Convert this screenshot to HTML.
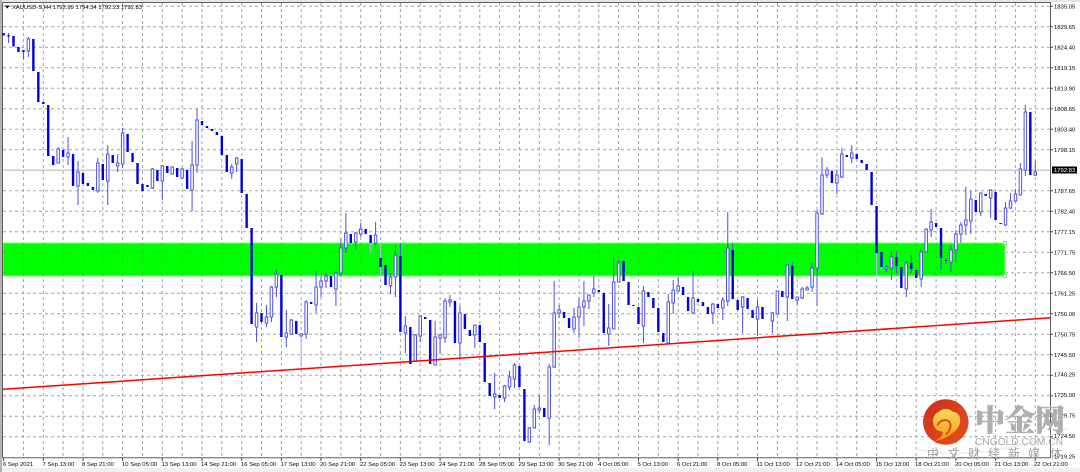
<!DOCTYPE html>
<html><head><meta charset="utf-8"><title>XAUUSD-S,H4</title>
<style>
html,body{margin:0;padding:0;background:#fff;width:1080px;height:472px;overflow:hidden}
svg{display:block;filter:blur(.3px)}
text{font-family:"Liberation Sans","Noto Sans CJK SC",sans-serif}
.p text{font-size:5.9px;fill:#000}
.t text{font-size:5.9px;fill:#000}
</style></head><body>
<svg width="1080" height="472" viewBox="0 0 1080 472" xmlns="http://www.w3.org/2000/svg">
<defs>
<clipPath id="g"><rect x="3" y="243" width="1002" height="33"/></clipPath>
<linearGradient id="sw" x1="0" y1="0" x2="0" y2="1"><stop offset="0" stop-color="#fbd95a"/><stop offset=".6" stop-color="#f7b533"/><stop offset="1" stop-color="#ef8f1e"/></linearGradient>
<linearGradient id="rd" x1="0" y1="0" x2="1" y2="1"><stop offset="0" stop-color="#cf2e1c"/><stop offset="1" stop-color="#e4511b"/></linearGradient>
<path id="gr" d="M23.4 3V457M43.3 3V457M63.1 3V457M83 3V457M102.8 3V457M122.6 3V457M142.5 3V457M162.3 3V457M182.2 3V457M202 3V457M221.8 3V457M241.7 3V457M261.5 3V457M281.4 3V457M301.2 3V457M321 3V457M340.9 3V457M360.7 3V457M380.6 3V457M400.4 3V457M420.2 3V457M440.1 3V457M459.9 3V457M479.8 3V457M499.6 3V457M519.4 3V457M539.3 3V457M559.1 3V457M579 3V457M598.8 3V457M618.6 3V457M638.5 3V457M658.3 3V457M678.2 3V457M698 3V457M717.8 3V457M737.7 3V457M757.5 3V457M777.4 3V457M797.2 3V457M817 3V457M836.9 3V457M856.7 3V457M876.6 3V457M896.4 3V457M916.2 3V457M936.1 3V457M955.9 3V457M975.8 3V457M995.6 3V457M1015.4 3V457M1035.3 3V457M3 6.2H1050M3 26.7H1050M3 47.2H1050M3 67.7H1050M3 88.2H1050M3 108.7H1050M3 129.2H1050M3 149.7H1050M3 190.7H1050M3 211.2H1050M3 231.7H1050M3 252.2H1050M3 272.7H1050M3 293.2H1050M3 313.7H1050M3 334.2H1050M3 354.7H1050M3 375.2H1050M3 395.7H1050M3 416.2H1050M3 436.7H1050"/>
</defs>
<rect width="1080" height="472" fill="#fff"/>
<rect width="1080" height="2" fill="#e6e6e6"/>
<rect y="468" width="1080" height="4" fill="#f0f0f0"/>
<rect width="2" height="472" fill="#b4b4b4"/>
<use href="#gr" fill="none" stroke="#98a4b2" stroke-width="1" stroke-dasharray="3 3"/>
<rect x="3" y="243" width="1002" height="33" fill="#00ff00" stroke="#7dff7d" stroke-width="1"/>
<g clip-path="url(#g)"><use href="#gr" fill="none" stroke="#28d028" stroke-width="1" stroke-dasharray="3 3"/></g>
<rect x="1003.5" y="241.5" width="3" height="3" fill="#fff" stroke="#7de87d"/>
<rect x="1003.5" y="274.5" width="3" height="3" fill="#fff" stroke="#7de87d"/>
<path d="M3 170.2H1050" stroke="#c6cad0" stroke-width="1.4"/>
<!-- frame -->
<path d="M2.5 2.5V458M2 2.5H1050.5M1050.5 2V458M2 457.8H1051" fill="none" stroke="#5e5e5e" stroke-width="1"/>
<g transform="translate(3.6 0) scale(4.96 1)">
<!-- bull wicks -->
<path vector-effect="non-scaling-stroke" fill="none" stroke="#4f4fe0" stroke-width="1" d="M5 37V57M11 147V163M13 137V165M15 161V205M19 158V193M21 145V205M23 154V172M24 128V168M30 168V189M32 165V200M36 168V179M38 141V211M39 109V173M46 164V179M47 157V172M51 303V342M53 305V327M54 286V322M55 269V297M57 310V347M58 319V335M61 300V339M63 271V313M64 276V297M65 273V288M67 271V306M68 239V277M69 213V253M71 232V250M72 223V237M75 222V248M78 273V294M79 245V297M81 316V353M83 334V362M84 315V342M87 321V365M88 334V354M89 298V343M90 295V307M92 306V358M95 325V348M99 373V409M101 385V402M102 371V390M103 363V388M106 427V443M107 405V428M108 395V413M110 364V445M111 281V368M112 305V318M115 308V333M116 297V338M117 281V326M118 295V309M119 276V297M122 304V346M123 257V329M124 260V282M129 286V343M134 294V344M135 280V314M136 277V291M139 271V313M143 303V324M145 297V320M146 212V306M149 296V333M152 300V336M155 312V333M158 264V321M160 297V305M161 287V299M162 286V290M163 263V292M164 210V306M165 157V215M166 167V178M168 170V194M169 148V178M171 145V163M178 265V272M179 251V280M182 261V297M185 247V287M187 209V237M191 245V272M192 230V262M193 222V243M194 187V235M195 191V234M197 193V216M199 189V218M202 202V226M203 193V209M204 189V202M205 163V195M206 105V176M208 161V176M1 33V43M4 50V59M180 252V273M183 255V273M189 258V270M190 258V264M80 243V256M147 243V250M159 262V266"/>
<!-- light wicks -->
<path vector-effect="non-scaling-stroke" fill="none" stroke="#b3b3f0" stroke-width="1.2" d="M60 334V367M74 243V253M76 243V276M176 253V276M177 267V272"/>
<!-- bull bodies -->
<path vector-effect="non-scaling-stroke" fill="#fff" stroke="#5252e4" stroke-width="1" d="M4.75 39h.5v12h-.5zM10.75 149h.5v14h-.5zM12.75 153h.5v4h-.5zM14.75 172h.5v14h-.5zM18.75 163h.5v28h-.5zM20.75 154h.5v27h-.5zM22.75 163h.5v3h-.5zM23.75 133h.5v31h-.5zM29.75 169h.5v19h-.5zM31.75 166h.5v15h-.5zM33.75 167h.5v7h-.5zM35.75 169h.5v9h-.5zM37.75 165h.5v25h-.5zM38.75 120h.5v45h-.5zM45.75 167h.5v6h-.5zM46.75 158h.5v6h-.5zM50.75 313h.5v14h-.5zM52.75 317h.5v6h-.5zM53.75 287h.5v30h-.5zM54.75 274h.5v13h-.5zM56.75 333h.5v4h-.5zM57.75 320h.5v14h-.5zM59.75 334h.5v2h-.5zM60.75 302h.5v32h-.5zM62.75 287h.5v18h-.5zM63.75 281h.5v6h-.5zM64.75 276h.5v5h-.5zM66.75 273h.5v16h-.5zM67.75 248h.5v25h-.5zM68.75 233h.5v15h-.5zM70.75 233h.5v9h-.5zM71.75 229h.5v5h-.5zM74.75 235h.5v8h-.5zM77.75 277h.5v9h-.5zM78.75 255h.5v22h-.5zM80.75 326h.5v7h-.5zM82.75 335h.5v26h-.5zM83.75 316h.5v20h-.5zM86.75 337h.5v28h-.5zM87.75 335h.5v3h-.5zM88.75 301h.5v37h-.5zM89.75 300h.5v2h-.5zM91.75 313h.5v30h-.5zM94.75 325h.5v10h-.5zM98.75 394h.5v3h-.5zM100.75 386h.5v12h-.5zM101.75 377h.5v10h-.5zM102.75 365h.5v14h-.5zM105.75 428h.5v14h-.5zM106.75 409h.5v19h-.5zM107.75 408h.5v2h-.5zM109.75 367h.5v51h-.5zM110.75 313h.5v54h-.5zM111.75 310h.5v3h-.5zM114.75 317h.5v12h-.5zM115.75 307h.5v10h-.5zM116.75 301h.5v6h-.5zM117.75 295h.5v6h-.5zM118.75 289h.5v4h-.5zM121.75 328h.5v6h-.5zM122.75 282h.5v47h-.5zM123.75 263h.5v19h-.5zM128.75 291h.5v35h-.5zM133.75 302h.5v41h-.5zM134.75 290h.5v13h-.5zM135.75 286h.5v5h-.5zM138.75 298h.5v15h-.5zM142.75 304h.5v9h-.5zM144.75 300h.5v8h-.5zM145.75 248h.5v53h-.5zM148.75 297h.5v10h-.5zM151.75 307h.5v12h-.5zM154.75 313h.5v8h-.5zM155.75 291h.5v23h-.5zM157.75 265h.5v32h-.5zM159.75 297h.5v3h-.5zM160.75 289h.5v9h-.5zM161.75 288h.5v2h-.5zM162.75 268h.5v19h-.5zM163.75 213h.5v55h-.5zM164.75 175h.5v39h-.5zM165.75 170h.5v5h-.5zM167.75 175h.5v8h-.5zM168.75 154h.5v23h-.5zM170.75 153h.5v5h-.5zM177.75 267h.5v2h-.5zM178.75 257h.5v11h-.5zM181.75 263h.5v26h-.5zM184.75 252h.5v27h-.5zM185.75 229h.5v23h-.5zM186.75 222h.5v8h-.5zM190.75 250h.5v12h-.5zM191.75 234h.5v16h-.5zM192.75 225h.5v9h-.5zM193.75 220h.5v5h-.5zM194.75 199h.5v22h-.5zM196.75 193h.5v19h-.5zM198.75 190h.5v8h-.5zM201.75 208h.5v17h-.5zM202.75 201h.5v7h-.5zM203.75 194h.5v7h-.5zM204.75 169h.5v26h-.5zM205.75 112h.5v58h-.5zM207.75 172h.5v3h-.5z"/>
<!-- bear bodies -->
<path vector-effect="non-scaling-stroke" fill="none" stroke="#0000dc" stroke-width="2.4" d="M0 33V35.5M1 35V36.5M2 36V46.5M3 47V52M4 50V52M6 39V71M7 72V102M8 102V104M9 105V156M10 156V165M12 150V157M14 154V186M16 173V184M17 183V186M18 187V190M20 164V180M22 155V163M25 134V152M26 153V162M27 163V184M28 184V191M29 185V187M31 170V181M33 166V173M35 168V177M37 170V189M40 121V125M41 126V128M42 129V131M43 132V135M44 136V155M45 155V172M48 159V193M49 194V228M50 228V324M52 313V322M56 275V337M59 321V334M62 302V304M66 276V287M70 234V243M73 229V234M74 235V243M76 258V267M77 265V285M80 256V332M82 327V364M85 317V319M86 320V364M91 301V343M93 314V329M94 330V336M96 325V342M97 343V382M98 383V396M100 395V398M104 366V387M105 389V441M109 408V417M113 312V318M114 318V328M120 290V292M121 293V333M125 261V281M126 282V305M127 305V306M128 307V324M130 292V297M131 298V308M132 308V332M133 333V342M137 287V295M138 297V311M140 299V302M141 302V306M142 307V314M144 304V308M147 250V299M148 300V310M150 298V309M151 310V318M153 307V319M157 291V297M159 266V299M167 171V183M170 155V157M172 154V159M173 160V163M174 164V170M175 172V205M176 206V253M177 252V267M180 257V266M181 267V288M183 263V269M184 270V278M188 223V227M189 228V258M190 260V261M196 200V212M198 194V196M200 192V220M201 223V224M207 112V175"/>
</g>
<path d="M3 389.3L1050.5 317.8" stroke="#ff0000" stroke-width="1.5" fill="none"/>
<!-- ticks -->
<path d="M3.6 458V461M43.3 458V461M83 458V461M122.6 458V461M162.3 458V461M202 458V461M241.7 458V461M281.4 458V461M321 458V461M360.7 458V461M400.4 458V461M440.1 458V461M479.8 458V461M519.4 458V461M559.1 458V461M598.8 458V461M638.5 458V461M678.2 458V461M717.8 458V461M757.5 458V461M797.2 458V461M836.9 458V461M876.6 458V461M916.2 458V461M955.9 458V461M995.6 458V461M1035.3 458V461M1051 6.2H1053M1051 26.7H1053M1051 47.2H1053M1051 67.7H1053M1051 88.2H1053M1051 108.7H1053M1051 129.2H1053M1051 149.7H1053M1051 190.7H1053M1051 211.2H1053M1051 231.7H1053M1051 252.2H1053M1051 272.7H1053M1051 293.2H1053M1051 313.7H1053M1051 334.2H1053M1051 354.7H1053M1051 375.2H1053M1051 395.7H1053M1051 416.2H1053M1051 436.7H1053" stroke="#444" stroke-width="1"/>
<!-- header -->
<path d="M5 5.5h4.6L7.3 8.6z" fill="#000"/>
<text x="12" y="9" font-size="5.9" fill="#000" textLength="130" lengthAdjust="spacingAndGlyphs">XAUUSD-S,H4  1792.99 1794.34 1792.23 1792.83</text>
<!-- price labels -->
<g class="p">
<text x="1054" y="8.3">1835.05</text><text x="1054" y="28.8">1829.65</text><text x="1054" y="49.3">1824.40</text><text x="1054" y="69.8">1819.15</text><text x="1054" y="90.3">1813.90</text><text x="1054" y="110.8">1808.65</text><text x="1054" y="131.3">1803.40</text><text x="1054" y="151.8">1798.15</text><text x="1054" y="192.8">1787.65</text><text x="1054" y="213.3">1782.40</text><text x="1054" y="233.8">1777.15</text><text x="1054" y="254.3">1771.75</text><text x="1054" y="274.8">1766.50</text><text x="1054" y="295.3">1761.25</text><text x="1054" y="315.8">1756.00</text><text x="1054" y="336.3">1750.75</text><text x="1054" y="356.8">1745.50</text><text x="1054" y="376.6">1740.25</text><text x="1054" y="397.1">1735.00</text><text x="1054" y="417.6">1729.75</text><text x="1054" y="438.1">1724.50</text><text x="1054" y="458.6">1719.25</text>
</g>
<rect x="1052" y="166.5" width="25" height="7" fill="#000"/>
<text x="1054" y="172.2" font-size="5.9" fill="#fff">1792.83</text>
<!-- time labels -->
<g class="t">
<text x="3" y="466">6 Sep 2021</text><text x="42.5" y="466">7 Sep 13:00</text><text x="82" y="466">8 Sep 21:00</text><text x="122" y="466">10 Sep 05:00</text><text x="161.5" y="466">13 Sep 13:00</text><text x="201" y="466">14 Sep 21:00</text><text x="241" y="466">16 Sep 05:00</text><text x="280.5" y="466">17 Sep 13:00</text><text x="320" y="466">20 Sep 21:00</text><text x="360" y="466">22 Sep 05:00</text><text x="399.5" y="466">23 Sep 13:00</text><text x="439" y="466">24 Sep 21:00</text><text x="479" y="466">28 Sep 05:00</text><text x="518.5" y="466">29 Sep 13:00</text><text x="558" y="466">30 Sep 21:00</text><text x="598" y="466">4 Oct 05:00</text><text x="637.5" y="466">5 Oct 13:00</text><text x="677" y="466">6 Oct 21:00</text><text x="717" y="466">8 Oct 05:00</text><text x="756.5" y="466">11 Oct 13:00</text><text x="796" y="466">12 Oct 21:00</text><text x="836" y="466">14 Oct 05:00</text><text x="875.5" y="466">15 Oct 13:00</text><text x="915" y="466">18 Oct 21:00</text><text x="955" y="466">20 Oct 05:00</text><text x="994.5" y="466">21 Oct 13:00</text><text x="1034" y="466">22 Oct 21:00</text>
</g>
<!-- watermark -->
<path d="M915 448C940 458 1010 456 1068 428" fill="none" stroke="#e4e4e4" stroke-width="1.4" opacity=".7"/>
<circle cx="945.8" cy="422" r="22.7" fill="url(#rd)"/>
<path d="M934.5 441C942 439.5 949 437 953 432.5C958 429.5 961 424 960 418.5C959.5 414 956 412 952 411.5C950 408.5 942 408 939.5 411.5C935 413 932.5 418 933 422C933.5 428 937 431.5 942 431.5C944 435 940 438.5 934.5 441Z" fill="url(#sw)"/>
<path d="M937.5 425.5C939.5 419 949.5 418 950.5 424.5C951 428.5 949 431.5 946 434.5" fill="none" stroke="#dc4a1e" stroke-width="1.9"/>
<text x="975" y="431" font-size="30" font-weight="900" fill="#afafaf" stroke="#afafaf" stroke-width=".5" textLength="90" lengthAdjust="spacingAndGlyphs" style="font-family:'Noto Serif CJK SC','Noto Sans CJK SC',sans-serif">中金网</text>
<text x="975" y="445" font-size="10.5" fill="#a8a8a8" textLength="88" lengthAdjust="spacingAndGlyphs">CNGOLD.COM.CN</text>
<text x="927 947.5 968 988 1008 1028 1050" y="458" font-size="12" fill="#a2a2a2" style="font-family:'Noto Sans CJK SC',sans-serif">中文财经新媒体</text>
</svg>
</body></html>
